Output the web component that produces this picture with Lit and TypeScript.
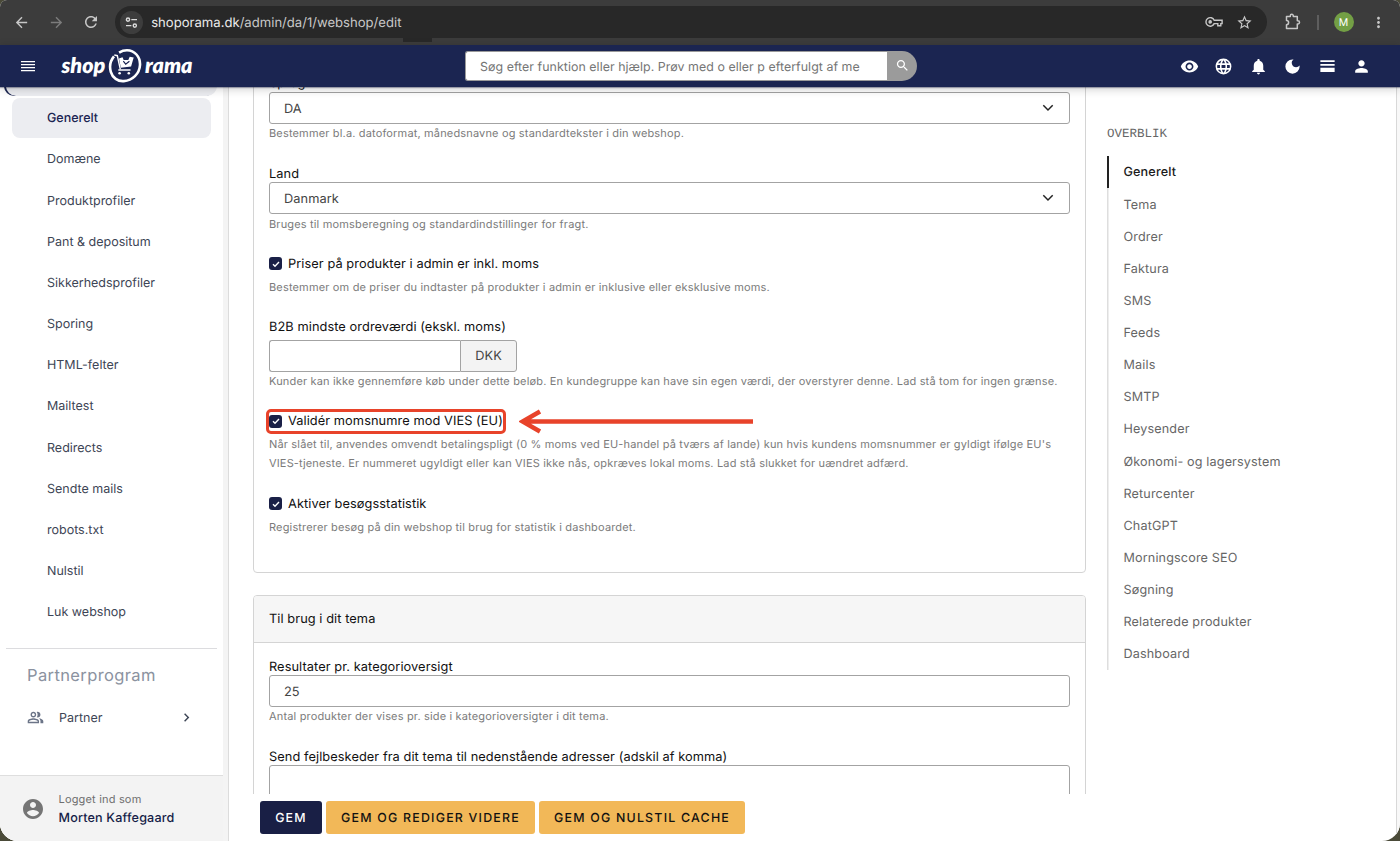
import { LitElement, html, css, svg } from "lit";
import { customElement } from "lit/decorators.js";
import { classMap } from "lit/directives/class-map.js";

const ICONS: Record<string, string> = {
  back: "M20 11H7.83l5.59-5.59L12 4l-8 8 8 8 1.41-1.41L7.83 13H20v-2z",
  forward: "M12 4l-1.41 1.41L16.17 11H4v2h12.17l-5.58 5.59L12 20l8-8z",
  reload:
    "M17.65 6.35C16.2 4.9 14.21 4 12 4c-4.42 0-7.99 3.58-7.99 8s3.57 8 7.99 8c3.73 0 6.84-2.55 7.73-6h-2.08c-.82 2.33-3.04 4-5.65 4-3.31 0-6-2.69-6-6s2.69-6 6-6c1.66 0 3.14.69 4.22 1.78L13 11h7V4l-2.35 2.35z",
  star: "M22 9.24l-7.19-.62L12 2 9.19 8.63 2 9.24l5.46 4.73L5.82 21 12 17.27 18.18 21l-1.63-7.03L22 9.24zM12 15.4l-3.76 2.27 1-4.28-3.32-2.88 4.38-.38L12 6.1l1.71 4.04 4.38.38-3.32 2.88 1 4.28L12 15.4z",
  dots: "M12 8c1.1 0 2-.9 2-2s-.9-2-2-2-2 .9-2 2 .9 2 2 2zm0 2c-1.1 0-2 .9-2 2s.9 2 2 2 2-.9 2-2-.9-2-2-2zm0 6c-1.1 0-2 .9-2 2s.9 2 2 2 2-.9 2-2-.9-2-2-2z",
  eye: "M12 4.5C7 4.5 2.73 7.61 1 12c1.73 4.39 6 7.5 11 7.5s9.27-3.11 11-7.5c-1.73-4.39-6-7.5-11-7.5zM12 17c-2.76 0-5-2.24-5-5s2.24-5 5-5 5 2.24 5 5-2.24 5-5 5zm0-8c-1.66 0-3 1.34-3 3s1.34 3 3 3 3-1.34 3-3-1.34-3-3-3z",
  web: "M16.36,14C16.44,13.34 16.5,12.68 16.5,12C16.5,11.32 16.44,10.66 16.36,10H19.74C19.9,10.64 20,11.31 20,12C20,12.69 19.9,13.36 19.74,14M14.59,19.56C15.19,18.45 15.65,17.25 15.97,16H18.92C17.96,17.65 16.43,18.93 14.59,19.56M14.34,14H9.66C9.56,13.34 9.5,12.68 9.5,12C9.5,11.32 9.56,10.65 9.66,10H14.34C14.43,10.65 14.5,11.32 14.5,12C14.5,12.68 14.43,13.34 14.34,14M12,19.96C11.17,18.76 10.5,17.43 10.09,16H13.91C13.5,17.43 12.83,18.76 12,19.96M8,8H5.08C6.03,6.34 7.57,5.06 9.4,4.44C8.8,5.55 8.35,6.75 8,8M5.08,16H8C8.35,17.25 8.8,18.45 9.4,19.56C7.57,18.93 6.03,17.65 5.08,16M4.26,14C4.1,13.36 4,12.69 4,12C4,11.31 4.1,10.64 4.26,10H7.64C7.56,10.66 7.5,11.32 7.5,12C7.5,12.68 7.56,13.34 7.64,14M12,4.03C12.83,5.23 13.5,6.57 13.91,8H10.09C10.5,6.57 11.17,5.23 12,4.03M18.92,8H15.97C15.65,6.75 15.19,5.55 14.59,4.44C16.43,5.07 17.96,6.34 18.92,8M12,2C6.47,2 2,6.5 2,12A10,10 0 0,0 12,22A10,10 0 0,0 22,12A10,10 0 0,0 12,2Z",
  bell: "M12 22c1.1 0 2-.9 2-2h-4c0 1.1.89 2 2 2zm6-6v-5c0-3.07-1.64-5.64-4.5-6.32V4c0-.83-.67-1.5-1.5-1.5s-1.5.67-1.5 1.5v.68C7.63 5.36 6 7.92 6 11v5l-2 2v1h16v-1l-2-2z",
  moon: "M12 3a9 9 0 1 0 9 9c0-.46-.04-.92-.1-1.36a5.389 5.389 0 0 1-4.4 2.26 5.403 5.403 0 0 1-3.14-9.8c-.44-.06-.9-.1-1.36-.1z",
  rows: "M3 4h18v2.4H3zM3 8.800h18v2.4H3zM3 13.600h18v5.4H3z",
  person:
    "M12 12c2.21 0 4-1.79 4-4s-1.79-4-4-4-4 1.79-4 4 1.79 4 4 4zm0 2c-2.67 0-8 1.34-8 4v2h16v-2c0-2.66-5.33-4-8-4z",
  search:
    "M15.5 14h-.79l-.28-.27C15.41 12.59 16 11.11 16 9.5 16 5.91 13.09 3 9.5 3S3 5.91 3 9.5 5.91 16 9.5 16c1.61 0 3.09-.59 4.23-1.57l.27.28v.79l5 4.99L20.49 19l-4.99-5zm-6 0C7.01 14 5 11.99 5 9.5S7.01 5 9.5 5 14 7.01 14 9.5 11.99 14 9.5 14z",
  account:
    "M12 2C6.48 2 2 6.48 2 12s4.48 10 10 10 10-4.48 10-10S17.52 2 12 2zm0 3c1.66 0 3 1.34 3 3s-1.34 3-3 3-3-1.34-3-3 1.34-3 3-3zm0 14.2c-2.5 0-4.71-1.28-6-3.22.03-1.99 4-3.08 6-3.08 1.99 0 5.97 1.09 6 3.08-1.29 1.94-3.5 3.22-6 3.22z",
  group:
    "M16.67 13.13C18.04 14.06 19 15.32 19 17v3h4v-3c0-2.18-3.57-3.47-6.33-3.87z M15 12c2.21 0 4-1.79 4-4s-1.79-4-4-4c-.47 0-.91.1-1.33.24C14.5 5.27 15 6.58 15 8s-.5 2.73-1.33 3.76c.42.14.86.24 1.33.24z M9 12c2.21 0 4-1.79 4-4s-1.79-4-4-4-4 1.79-4 4 1.79 4 4 4zm0-6c1.1 0 2 .9 2 2s-.9 2-2 2-2-.9-2-2 .9-2 2-2z M9 13c-2.67 0-8 1.34-8 4v3h16v-3c0-2.66-5.33-4-8-4zm6 5H3v-.99C3.2 16.29 6.3 15 9 15s5.8 1.29 6 2v1z",
  chevron: "M10 6L8.59 7.41 13.17 12l-4.58 4.59L10 18l6-6z",
};

const icon = (name: string, size: number) =>
  html`<svg width=${size} height=${size} viewBox="0 0 24 24" fill="currentColor">${svg`<path d=${ICONS[name]}></path>`}</svg>`;

@customElement("browser-bar")
class BrowserBar extends LitElement {
  static styles = css`
    :host { display: flex; align-items: center; height: 45px; box-sizing: border-box; background: #3c3c3c; color: #c7c7c7; padding: 0 0 1px 13px; position: relative; }
    svg { display: block; flex: none; }
    .nav { display: flex; gap: 17.5px; width: 102px; align-items: center; }
    .dim { color: #7c7c7c; }
    .address { display: flex; align-items: center; box-sizing: border-box; width: 1152px; height: 32px; border-radius: 16px; background: #282828; padding: 0 14px 0 5px; }
    .tune { display: grid; place-items: center; width: 23px; height: 23px; border-radius: 50%; background: #3d3d3d; color: #dcdcdc; }
    .url { margin-left: 8.2px; padding-top: 1px; font-size: 13.1px; color: #c9c9c9; flex: 1; white-space: nowrap; }
    .host { color: #ececec; }
    .key { margin-right: 13px; }
    .ext { margin-left: 15px; }
    .sep { width: 1.5px; height: 15px; background: #5e5e5e; margin: 0 15px 0 14px; }
    .avatar { display: grid; place-items: center; width: 20px; height: 20px; border-radius: 50%; background: #739f45; color: #fff; font-size: 10.5px; }
    .more { margin-left: 16px; }
    .tab { position: absolute; left: 403px; top: 38px; width: 29px; height: 4px; background: #282828; }
  `;
  render() {
    return html`
      <div class="nav">${icon("back", 17)}<span class="dim">${icon("forward", 17)}</span>${icon("reload", 18)}</div>
      <div class="address">
        <span class="tune">
          <svg width="13" height="13" viewBox="0 0 13 13" fill="none" stroke="currentColor" stroke-width="1.4">
            <circle cx="3" cy="3.6" r="1.6"></circle><path d="M6.3 3.6H12M1 9.6h5.4"></path><circle cx="9.8" cy="9.6" r="1.6"></circle>
          </svg>
        </span>
        <span class="url"><span class="host">shoporama.dk</span>/admin/da/1/webshop/edit</span>
        <svg class="key" width="18" height="12" viewBox="0 0 18 12" fill="none" stroke="currentColor" stroke-width="1.4">
          <path d="M9.2 4.2a4.3 4.3 0 1 0 0 3.4h3.6v2.2h3v-2.2h1.3V4.2z"></path><circle cx="5.2" cy="5.9" r="1.1" fill="currentColor"></circle>
        </svg>
        ${icon("star", 17)}
      </div>
      <svg class="ext" width="21" height="20" viewBox="0 0 21 20" fill="none" stroke="currentColor" stroke-width="1.5" stroke-linejoin="round">
        <path d="M4.5 4.5h3.8v-.7a1.5 1.5 0 0 1 3 0v.7h4v4.2h.6a1.6 1.6 0 0 1 0 3.2h-.6v4.6H4.5v-3.8a2.1 2.1 0 0 0 0-4.2z"></path>
      </svg>
      <span class="sep"></span>
      <span class="avatar">M</span>
      <span class="more">${icon("dots", 17)}</span>
      <span class="tab"></span>
    `;
  }
}

@customElement("shop-header")
class ShopHeader extends LitElement {
  static styles = css`
    :host { display: flex; align-items: center; height: 42px; box-sizing: border-box; background: #1b2551; color: #fff; padding: 0 29px 0 21px; box-shadow: 0 1px 1px rgba(20, 25, 60, 0.35), 0 2px 9px rgba(0, 0, 0, 0.2); position: relative; z-index: 2; }
    svg { display: block; flex: none; }
    .menu { width: 14px; margin-right: 26.5px; }
    .logo { display: flex; align-items: center; width: 403.5px; font: italic 800 21.5px/24px Lato, sans-serif; }
    .mark { margin-right: 3px; }
    .word { flex: none; width: 46.5px; transform: translateY(-1px); }
    .search { display: flex; width: 452px; height: 30px; }
    .field { display: flex; align-items: center; box-sizing: border-box; width: 422px; border: 1px solid #9a9a9a; border-right: 0; border-radius: 3px 0 0 3px; background: #fff; color: #757575; font-size: 12.4px; letter-spacing: 0.045px; padding-left: 14px; white-space: nowrap; }
    .go { display: grid; place-items: center; width: 30px; background: #9b9b9b; border-radius: 0 15px 15px 0; padding-bottom: 1px; box-sizing: border-box; }
    .tools { display: flex; gap: 15.4px; margin-left: auto; }
  `;
  render() {
    return html`
      <svg class="menu" width="14" height="12" viewBox="0 0 14 12" fill="currentColor">
        <path d="M0 1h14v1.300H0zM0 4h14v1.300H0zM0 7h14v1.300H0zM0 10h14v1.300H0z"></path>
      </svg>
      <div class="logo">
        <span class="word">shop</span>
        <svg class="mark" width="34" height="36" viewBox="0 0 34 36" fill="none" stroke="#fff">
          <path d="M6 8.300C2.500 12.500 1.300 18.500 2.800 23.800c1.700 6 7 9.800 13 9.300C24.500 32.500 31.500 25.800 32 17 32.400 8.500 26.500 2.400 19 2.300c-3.300 0-5.800 1-7.900 2.300" stroke-width="2.600"></path>
          <path d="M6.300 7 9.300 7.700 12.300 21.300" stroke-width="1.400"></path>
          <path d="M11 10.500l3.500-1.200 1.200 2.800 4.600-.2 1.400-3.200 4 .8-2.600 9-10.300 1.200z" fill="#fff" stroke="none"></path>
          <path d="M15.300 13.200l2.400 3 3.700-3" stroke="#1b2551" stroke-width="1.200"></path>
          <path d="M10.300 22h12.200" stroke-width="1.400"></path>
          <circle cx="11.600" cy="25.300" r="1.300" fill="#fff" stroke="none"></circle>
          <circle cx="20.800" cy="25.300" r="1.300" fill="#fff" stroke="none"></circle>
        </svg>
        <span class="word">rama</span>
      </div>
      <div class="search">
        <div class="field">Søg efter funktion eller hjælp. Prøv med o eller p efterfulgt af me</div>
        <div class="go">${icon("search", 15)}</div>
      </div>
      <div class="tools">${["eye", "web", "bell", "moon", "rows", "person"].map((n) => icon(n, 19))}</div>
    `;
  }
}

@customElement("side-nav")
class SideNav extends LitElement {
  static styles = css`
    :host { display: flex; flex-direction: column; box-sizing: border-box; width: 223px; flex: none; background: #fff; overflow: hidden; color: #3d4555; font-size: 12.5px; }
    svg { display: block; flex: none; }
    .parent { height: 30px; margin: -21px 6px 0; border-radius: 10px; background: #ecedf1; box-shadow: -2px 0 0 #1b2551; flex: none; }
    .list { display: flex; flex-direction: column; padding: 1.2px 12px 0 11.5px; }
    .item { display: flex; align-items: center; height: 41.17px; }
    .label { display: flex; align-items: center; box-sizing: border-box; width: 100%; height: 39.5px; padding: 2px 0 0 35.5px; border-radius: 8px; }
    .active { background: #ecedf1; color: #1b2551; font-weight: 500; }
    .rule { height: 1px; background: #dcdcdf; margin: 15.5px 6px 0; flex: none; }
    .section { margin: 15px 0 0 27px; font-size: 16.5px; line-height: 22px; letter-spacing: 0.38px; color: #8b92a0; }
    .partner { display: flex; align-items: center; height: 24px; margin-top: 20px; padding: 0 28.5px 0 27px; }
    .partner .name { flex: 1; margin-left: 15px; padding-top: 1.5px; }
    .partner .who { color: #6b7487; }
    .user { display: flex; align-items: center; box-sizing: border-box; height: 66px; flex: none; margin-top: auto; padding-left: 21px; border-top: 1px solid #dedede; background: #f3f3f3; color: #757575; }
    .who-text { display: flex; flex-direction: column; margin-left: 13.5px; font-size: 11px; line-height: 18.5px; letter-spacing: 0.18px; color: #6e6e6e; }
    .strong { line-height: 20px; height: 18.5px; font-size: 12.6px; font-weight: 500; letter-spacing: 0.17px; color: #161e48; }
  `;
  items = ["Generelt", "Domæne", "Produktprofiler", "Pant & depositum", "Sikkerhedsprofiler", "Sporing", "HTML-felter", "Mailtest", "Redirects", "Sendte mails", "robots.txt", "Nulstil", "Luk webshop"];
  render() {
    return html`
      <div class="parent"></div>
      <div class="list">
        ${this.items.map((t, i) => html`<div class="item"><span class=${classMap({ label: true, active: i === 0 })}>${t}</span></div>`)}
      </div>
      <div class="rule"></div>
      <div class="section">Partnerprogram</div>
      <div class="partner"><span class="who">${icon("group", 17)}</span><span class="name">Partner</span>${icon("chevron", 17)}</div>
      <div class="user">
        ${icon("account", 24)}
        <div class="who-text"><span>Logget ind som</span><span class="strong">Morten Kaffegaard</span></div>
      </div>
    `;
  }
}

@customElement("settings-form")
class SettingsForm extends LitElement {
  static styles = css`
    :host { display: flex; flex-direction: column; width: 833px; flex: none; font-size: 12.8px; letter-spacing: 0.07px; color: #111; }
    svg { display: block; flex: none; }
    .scroll { height: 707px; overflow: hidden; flex: none; }
    .card { box-sizing: border-box; border: 1px solid #d4d4d4; border-radius: 4px; padding: 0 15px; background: #fff; }
    .first { height: 586px; margin-top: -100px; padding-top: 86px; }
    .second { height: 300px; margin-top: 22px; }
    .head { display: flex; align-items: center; height: 46px; margin: 0 -15px 14px; padding: 0 15px; background: #f6f6f6; border-bottom: 1px solid #d4d4d4; border-radius: 3px 3px 0 0; }
    .title { line-height: 21.4px; height: 18px; white-space: nowrap; }
    .top { line-height: 19px; }
    .box { display: flex; align-items: center; justify-content: space-between; box-sizing: border-box; height: 32px; border: 1px solid #a3a3a3; border-radius: 3px; padding: 0 15.5px 0 14px; color: #444; background: #fff; }
    .value { padding-top: 2px; }
    .help { padding-top: 0.5px; font-size: 11px; line-height: 18.5px; letter-spacing: 0.16px; color: #7b7b7b; white-space: nowrap; }
    .tight { padding: 0 0 0.5px; }
    .gap { margin-top: 21px; }
    .check { display: flex; align-items: center; gap: 6px; height: 20px; margin: 20.5px 0 3.5px; position: relative; width: max-content; }
    .last { margin-top: 21.5px; }
    .name { padding-top: 1.4px; }
    .tick { display: grid; place-items: center; width: 13px; height: 13px; border-radius: 3px; background: #1a2047; }
    .group { display: flex; width: 248px; margin-top: 4.5px; }
    .group .box { width: 191px; border-radius: 3px 0 0 3px; border-right: 0; }
    .unit { display: grid; place-items: center; box-sizing: border-box; width: 57px; padding-top: 1px; border: 1px solid #a3a3a3; border-radius: 0 3px 3px 0; background: #f3f3f3; color: #444; }
    .ring { position: absolute; left: -3px; top: -2px; width: 240px; height: 25px; box-sizing: border-box; border: 3px solid #e8432a; border-radius: 5px; }
    .arrow { position: absolute; left: 250px; top: -2px; }
    .actions { display: flex; gap: 4px; padding: 7px 0 0 7px; }
    .btn { display: grid; place-items: center; height: 33px; border-radius: 3px; background: #f2b858; color: #111; font-size: 12.4px; font-weight: 500; letter-spacing: 1.22px; white-space: nowrap; }
    .save { width: 62px; background: #191f45; color: #fff; }
    .edit { width: 209px; }
    .cache { width: 206px; }
  `;
  arrow = html`<svg width="12" height="8" viewBox="0 0 12 8" fill="none" stroke="#222" stroke-width="1.5"><path d="M1.3 1.3 6 6l4.7-4.7"></path></svg>`;
  tick = html`<span class="tick"><svg width="8" height="8" viewBox="0 0 8 8" fill="none" stroke="#fff" stroke-width="1.4"><path d="M1 4.2 3 6.2 7 2"></path></svg></span>`;
  render() {
    return html`
      <div class="scroll">
        <div class="card first">
          <div class="title top">Sprog</div>
          <div class="box"><span class="value">DA</span>${this.arrow}</div>
          <div class="help tight">Bestemmer bl.a. datoformat, månedsnavne og standardtekster i din webshop.</div>
          <div class="title gap">Land</div>
          <div class="box"><span class="value">Danmark</span>${this.arrow}</div>
          <div class="help">Bruges til momsberegning og standardindstillinger for fragt.</div>
          <div class="check">${this.tick}<span class="name">Priser på produkter i admin er inkl. moms</span></div>
          <div class="help">Bestemmer om de priser du indtaster på produkter i admin er inklusive eller eksklusive moms.</div>
          <div class="title gap">B2B mindste ordreværdi (ekskl. moms)</div>
          <div class="group"><div class="box"></div><div class="unit">DKK</div></div>
          <div class="help">Kunder kan ikke gennemføre køb under dette beløb. En kundegruppe kan have sin egen værdi, der overstyrer denne. Lad stå tom for ingen grænse.</div>
          <div class="check">
            ${this.tick}<span class="name">Validér momsnumre mod VIES (EU)</span>
            <span class="ring"></span>
            <svg class="arrow" width="236" height="26" viewBox="0 0 236 26" fill="none" stroke="#e8432a" stroke-width="4.5"><path d="M234 12.5H4.500M21 2.500 3.500 12.5 21 22.500"></path></svg>
          </div>
          <div class="help">Når slået til, anvendes omvendt betalingspligt (0 % moms ved EU-handel på tværs af lande) kun hvis kundens momsnummer er gyldigt ifølge EU's<br />VIES-tjeneste. Er nummeret ugyldigt eller kan VIES ikke nås, opkræves lokal moms. Lad stå slukket for uændret adfærd.</div>
          <div class="check last">${this.tick}<span class="name">Aktiver besøgsstatistik</span></div>
          <div class="help">Registrerer besøg på din webshop til brug for statistik i dashboardet.</div>
        </div>
        <div class="card second">
          <div class="head">Til brug i dit tema</div>
          <div class="title">Resultater pr. kategorioversigt</div>
          <div class="box"><span class="value">25</span></div>
          <div class="help tight">Antal produkter der vises pr. side i kategorioversigter i dit tema.</div>
          <div class="title gap">Send fejlbeskeder fra dit tema til nedenstående adresser (adskil af komma)</div>
          <div class="box"></div>
        </div>
      </div>
      <div class="actions">
        <div class="btn save">GEM</div>
        <div class="btn edit">GEM OG REDIGER VIDERE</div>
        <div class="btn cache">GEM OG NULSTIL CACHE</div>
      </div>
    `;
  }
}

@customElement("page-outline")
class PageOutline extends LitElement {
  static styles = css`
    :host { display: block; padding: 37px 0 0 21px; font-size: 12.6px; letter-spacing: 0.15px; color: #666; }
    .title { font: 12.5px/20px "Liberation Mono", monospace; letter-spacing: 0; color: #666; }
    .list { margin-top: 12px; box-shadow: inset 1.5px 0 0 #dedede; }
    .item { display: flex; align-items: center; box-sizing: border-box; height: 32.13px; padding: 1.8px 0 0 16.5px; white-space: nowrap; }
    .active { color: #1a1a1a; font-weight: 500; box-shadow: inset 2px 0 0 #222; }
  `;
  items = ["Generelt", "Tema", "Ordrer", "Faktura", "SMS", "Feeds", "Mails", "SMTP", "Heysender", "Økonomi- og lagersystem", "Returcenter", "ChatGPT", "Morningscore SEO", "Søgning", "Relaterede produkter", "Dashboard"];
  render() {
    return html`
      <div class="title">OVERBLIK</div>
      <div class="list">${this.items.map((t, i) => html`<div class=${classMap({ item: true, active: i === 0 })}>${t}</div>`)}</div>
    `;
  }
}

@customElement("app-root")
class AppRoot extends LitElement {
  static styles = css`
    :host { display: block; width: 1400px; height: 841px; overflow: hidden; background: #4a4a38; font-family: Inter, "Liberation Sans", sans-serif; text-rendering: geometricPrecision; }
    .window { display: flex; flex-direction: column; height: 841px; border-radius: 7px 7px 18px 18px; overflow: hidden; background: #fff; }
    .body { display: flex; flex: 1; min-height: 0; }
    .divider { box-sizing: border-box; width: 6px; background: #f4f4f4; border-right: 1.5px solid #dcdcdc; margin-right: 24px; }
    .outline { flex: 1; }
    .edge { box-sizing: border-box; width: 4px; background: #f8f8f8; border-left: 1px solid #d8d8d8; }
  `;
  render() {
    return html`
      <div class="window">
        <browser-bar></browser-bar>
        <shop-header></shop-header>
        <div class="body">
          <side-nav></side-nav>
          <div class="divider"></div>
          <settings-form></settings-form>
          <page-outline class="outline"></page-outline>
          <div class="edge"></div>
        </div>
      </div>
    `;
  }
}
